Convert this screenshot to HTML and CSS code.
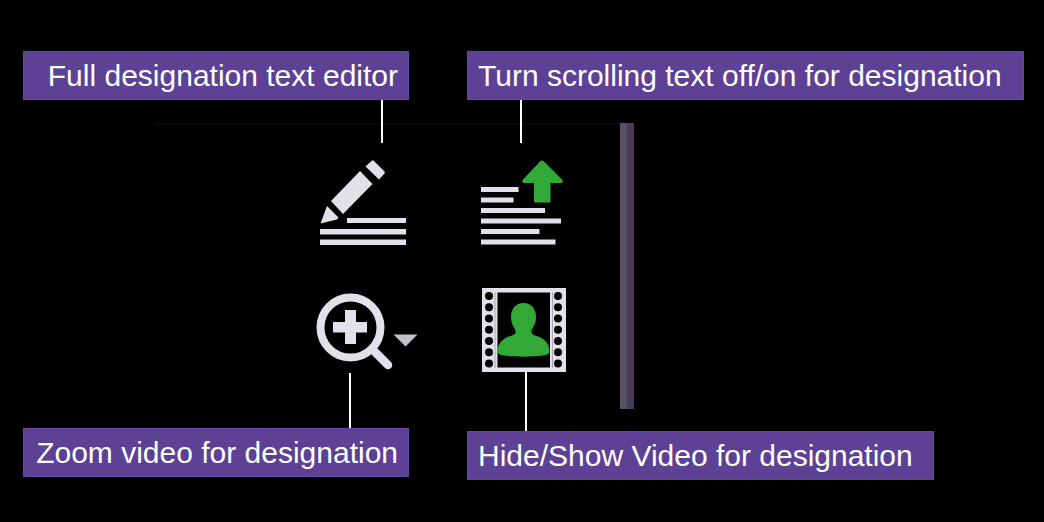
FILE: index.html
```html
<!DOCTYPE html>
<html lang="en">
<head>
<meta charset="utf-8">
<meta name="viewport" content="width=device-width, initial-scale=1">
<title>Designation toolbar guide</title>
<link rel="stylesheet" href="styles.css">
</head>
<body>
<main class="guide">
  <div class="panel-edge"></div>

  <section class="column column-left">
    <label class="callout callout-end" for="edit">Full designation text editor</label>
    <span class="connector connector-edit"></span>
    <button class="tool" id="edit" type="button">
      <svg width="90" height="88" viewBox="19 19 90 88" fill="#e2e1e9" aria-hidden="true">
        <path d="M72 20.500Q73 20 74 21L84.500 31.500Q85 32.500 84.500 33.500L79 39.500L65.500 26.500Z"/>
        <path d="M60 31L72.500 44L43 74L31 61Z"/>
        <path d="M27 66L38.500 77.500L37 79.500L20.500 83.500Z"/>
        <path d="M47 78h59v5H47zM20 89h86v5.500H20zM20 99.500h86v5.500H20z"/>
      </svg>
    </button>
    <button class="tool" id="zoom" type="button">
      <svg width="104" height="84" viewBox="15 14 104 84" aria-hidden="true">
        <circle cx="50.500" cy="52.500" r="30" fill="none" stroke="#e2e1e9" stroke-width="8"/>
        <path d="M73 75L88 90" stroke="#e2e1e9" stroke-width="8.500" stroke-linecap="round"/>
        <path d="M45 35h11v12h11v10.500H56V69H45V57.500H33V47h12z" fill="#e2e1e9"/>
        <path d="M93.500 59.500h24L105.500 71.500z" fill="#c2c0c8"/>
      </svg>
    </button>
    <span class="connector connector-zoom"></span>
    <label class="callout callout-end" for="zoom">Zoom video for designation</label>
  </section>

  <section class="column column-right">
    <label class="callout callout-wide" for="scroll">Turn scrolling text off/on for designation</label>
    <span class="connector connector-scroll"></span>
    <button class="tool" id="scroll" type="button">
      <svg width="90" height="88" viewBox="14 19 90 88" aria-hidden="true">
        <path fill="#e2e1e9" d="M16 47h37.500v5H16zM16 57.500h32.500v5H16zM16 68h64v5H16zM16 78.500h80v5H16zM16 89h58.500v5H16zM16 99.500h74.500v5H16z"/>
        <path fill="#32a836" d="M75.500 21Q77 20 78.500 21L97 39.500Q99 42.500 96 43H85.500V61.500Q85.500 62.500 84.500 62.500H70Q69 62.500 69 61.500V43H59Q56 42.500 58 39.500Z"/>
      </svg>
    </button>
    <button class="tool" id="video" type="button">
      <svg width="90" height="84" viewBox="14 13 90 84" aria-hidden="true">
        <path fill="#e2e1e9" fill-rule="evenodd" d="M17 13H101V97H17zM32.500 17.500V92.500H85V17.500z"/>
        <path d="M30 17v76M87.500 17v76" stroke="#aaa6b5" stroke-width="1"/>
        <path d="M24 21v68M93 21v68" stroke="#000" stroke-width="8" stroke-linecap="round" stroke-dasharray="0.100 11.150"/>
        <path fill="#32a836" d="M58.500 28C67 28 71.500 35 71 43C70.500 50 68 52 66.500 55.500C66 58.500 67 59.500 70 60.500C79 63 84.500 68 84.500 76C84.500 79 82 80 78 80.500C68 82 49 82 39 80.500C35 80 32.500 79 32.500 76C33 68 38 63 47 60.500C50 59.500 51 58.500 50.500 55.500C49 52 46.500 50 46 43C45.500 35 50 28 58.500 28Z"/>
      </svg>
    </button>
    <span class="connector connector-video"></span>
    <label class="callout callout-roomy" for="video">Hide/Show Video for designation</label>
  </section>
</main>
</body>
</html>
```
FILE: styles.css
```css
* {
  box-sizing: border-box;
}

body {
  margin: 0;
  background: #000;
  color: #fff;
  font-family: "Liberation Sans", Arial, sans-serif;
}

.guide {
  position: relative;
  display: grid;
  grid-template-columns: 386px minmax(0, 1fr);
  column-gap: 58px;
  padding: 51px 20px 40px 23px;
}

.column {
  position: relative;
  display: flex;
  flex-direction: column;
  align-items: flex-start;
}

.callout {
  padding: 8px 10px;
  border: 1px solid #6447a0;
  background: #5c4194;
  font-size: 30px;
  line-height: 31px;
  white-space: nowrap;
}

.callout-end {
  align-self: stretch;
  text-align: right;
}

.callout-wide {
  align-self: stretch;
}

.callout-roomy {
  padding-right: 20px;
}

.connector {
  width: 2px;
  background: #fff;
}

.connector-edit,
.connector-scroll {
  height: 43px;
  margin-bottom: 16px;
}

.connector-edit {
  margin-left: 358px;
}

.connector-scroll {
  margin-left: 53px;
}

.connector-zoom {
  height: 55px;
  margin-left: 326px;
}

.connector-video {
  height: 59px;
  margin-left: 58px;
}

.tool {
  padding: 0;
  border: 0;
  background: none;
}

.tool svg {
  display: block;
}

.column-left .tool {
  margin-left: 292px;
}

.column-left .tool:first-of-type {
  margin: 0 0 42px 296px;
}

.column-right .tool {
  margin-left: 12px;
}

.column-right .tool:first-of-type {
  margin-bottom: 41px;
}

.panel-edge {
  position: absolute;
  top: 123px;
  left: 155px;
  width: 479px;
  height: 286px;
  border-top: 2px solid #070707;
}

.panel-edge::after {
  content: "";
  position: absolute;
  top: -2px;
  right: 0;
  width: 14px;
  height: 286px;
  background: linear-gradient(90deg, #5a5068 0 45%, #493c58 55% 100%);
}
```
